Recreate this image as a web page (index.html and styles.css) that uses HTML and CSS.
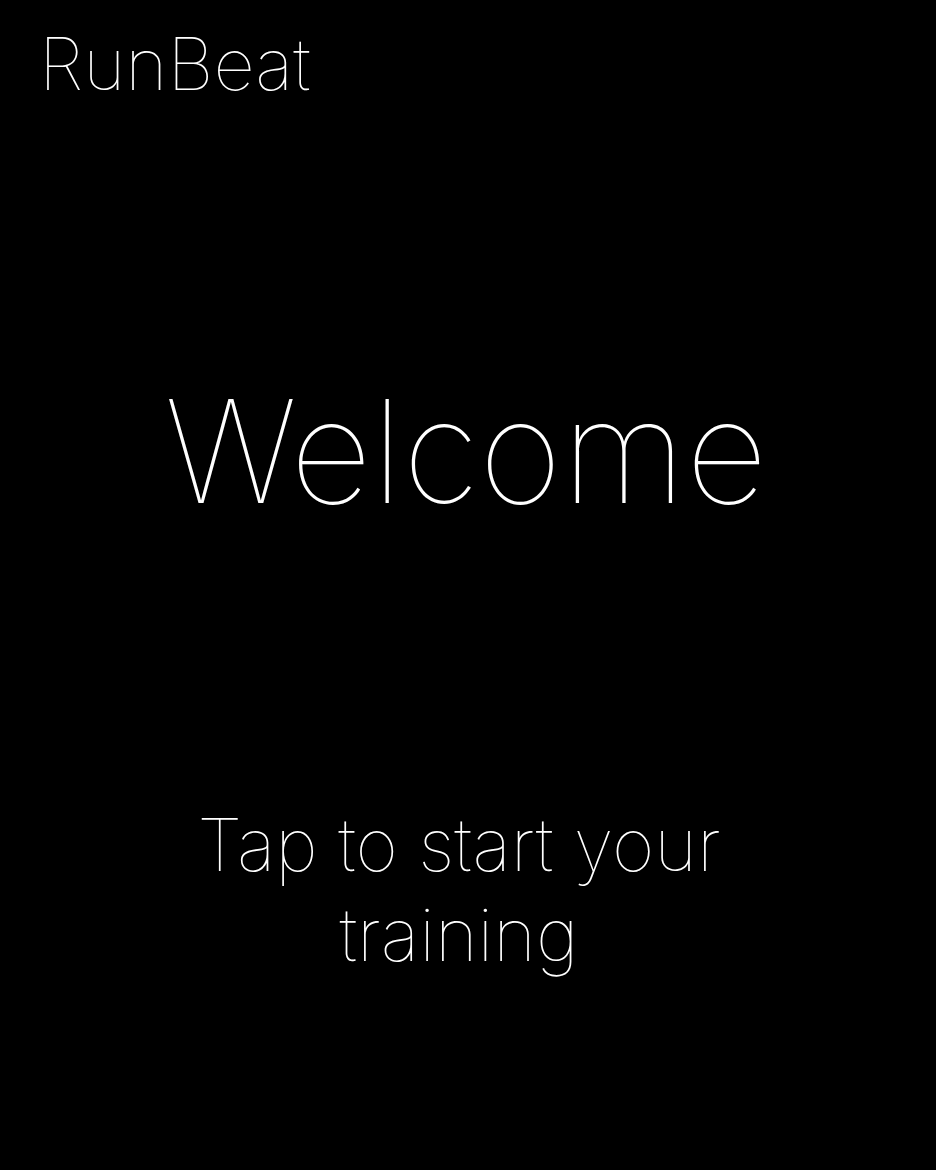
FILE: index.html
```html
<!DOCTYPE html>
<html>
<head>
<meta charset="utf-8">
<link rel="stylesheet" href="styles.css">
</head>
<body>
<div class="screen">
  <header class="brand">RunBeat</header>
  <main class="center">
    <h1 class="welcome">Welcome</h1>
    <p class="hint">Tap to start your training</p>
  </main>
</div>
</body>
</html>
```
FILE: styles.css
```css
html, body {
  margin: 0;
  padding: 0;
  background: #000;
}
.screen {
  width: 936px;
  height: 1170px;
  background: #000;
  color: #fff;
  font-family: Inter, "Noto Sans", sans-serif;
  display: flex;
  flex-direction: column;
  box-sizing: border-box;
}
.brand {
  font-size: 72px;
  font-weight: 100;
  line-height: 84px;
  padding: 22px 0 0 39px;
}
.center {
  display: flex;
  flex-direction: column;
  align-items: center;
  text-align: center;
}
.welcome {
  margin: 261px 4px 0 0;
  font-size: 143px;
  font-weight: 100;
  line-height: 168px;
}
.hint {
  margin: 265px 18px 0 0;
  width: 580px;
  font-size: 73px;
  font-weight: 100;
  line-height: 90px;
}
```
